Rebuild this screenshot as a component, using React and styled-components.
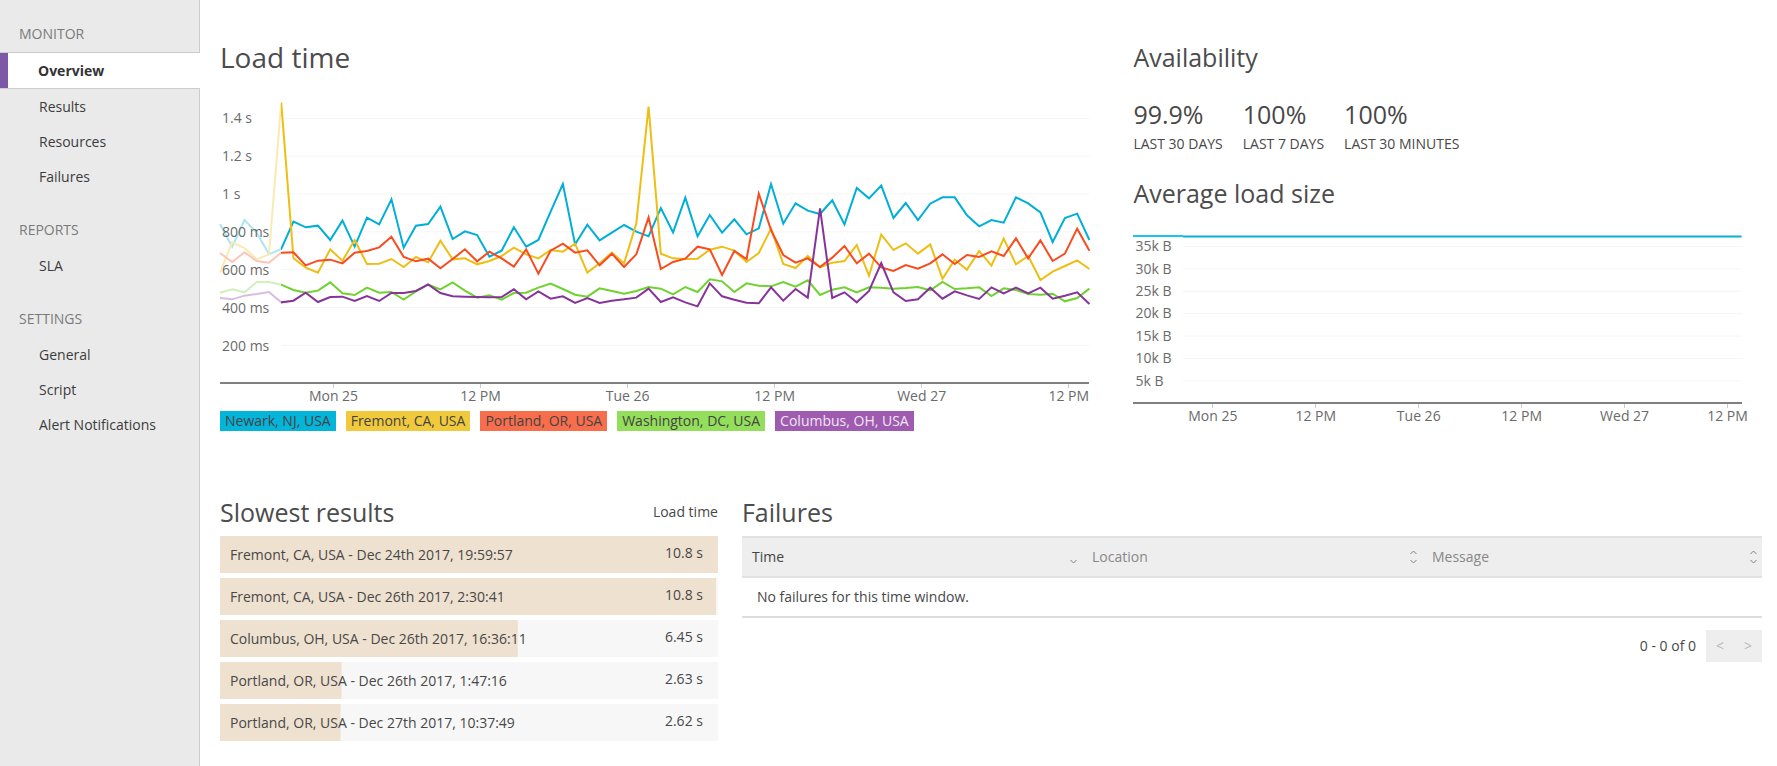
import React from 'react';
import styled, { createGlobalStyle } from 'styled-components';

const GlobalStyle = createGlobalStyle`
  * { box-sizing: border-box; }
  body {
    margin: 0;
    background: #fff;
    color: #484848;
    font-family: "Open Sans", "Noto Sans", sans-serif;
    font-size: 14px;
    line-height: 20px;
  }
  h1, h2, h3, p, ul, dl, dd { margin: 0; padding: 0; }
  ul { list-style: none; }
  button { font: inherit; border: 0; background: none; padding: 0; cursor: pointer; }
`;

const Page = styled.div`
  display: flex;
  min-height: 100vh;
`;

/* Sidebar */

const Sidebar = styled.nav`
  flex: 0 0 200px;
  display: flex;
  flex-direction: column;
  gap: 19px;
  padding: 17px 0;
  background: #eaeaea;
  box-shadow: inset -1px 0 #ccc;
`;

const NavHeading = styled.h3`
  padding: 0 0 2px 19px;
  font-size: 14px;
  font-weight: 400;
  line-height: 33px;
  text-transform: uppercase;
  color: #7a7a7a;
`;

const NavLink = styled.a`
  display: block;
  padding-left: 39px;
  line-height: 35px;
  color: #3c3c3c;
  text-decoration: none;

  &[aria-current='page'] {
    padding-left: 38px;
    border: solid #ccc;
    border-width: 1px 0;
    background: linear-gradient(to right, #7d58a6 8px, #fff 8px);
    font-weight: 700;
    color: #333;
  }
`;

/* Content */

const Main = styled.main`
  flex: 1;
  min-width: 0;
  display: flex;
  flex-direction: column;
  gap: 63px;
  padding: 39px 15px 25px 20px;
`;

const ChartsRow = styled.div`
  display: grid;
  grid-template-columns: 10fr 7fr;
  gap: 44px;
  padding-right: 20px;
`;

const TablesRow = styled.div`
  display: grid;
  grid-template-columns: 62fr 127fr;
  gap: 24px;
`;

const Title = styled.h2`
  font-size: ${(p) => (p.$large ? 28 : 25)}px;
  font-weight: 400;
  line-height: 36px;
  color: #4c4c4c;
`;

/* Charts */

const Chart = styled.figure`
  margin: ${(p) => p.$gap}px 0 0;
`;

const Plot = styled.div`
  display: grid;
  height: ${(p) => p.$height}px;
  border-bottom: 2px solid #808080;
  box-sizing: content-box;

  > * { grid-area: 1 / 1; min-height: 0; }
`;

const Drawing = styled.svg`
  display: block;
  width: 100%;
  height: 100%;
  overflow: visible;

  line, polyline {
    fill: none;
    vector-effect: non-scaling-stroke;
  }
`;

const YLabels = styled.ul`
  display: flex;
  flex-direction: column;
  padding: ${(p) => p.$top}px 2px ${(p) => p.$bottom}px;
  color: #6a6a6a;

  li {
    flex: 1;
    display: flex;
    align-items: center;
    min-height: 0;
  }
`;

const XLabels = styled.ul`
  display: flex;
  padding-left: 4.6%;
  color: #6a6a6a;

  li {
    flex: 0 0 17.73%;
    line-height: 24px;
    text-align: center;
    white-space: nowrap;
    background: linear-gradient(#ccc, #ccc) top center / 1px 4px no-repeat;
  }
`;

const Legend = styled.ul`
  display: flex;
  flex-wrap: wrap;
  gap: 10px;
  margin-top: 3px;
`;

const LegendTag = styled.li`
  padding: 0 5px;
  line-height: 20px;
  white-space: nowrap;
  background: ${(p) => p.$tint};
  color: ${(p) => (p.$light ? '#f0e6f3' : '#444')};
`;

/* Availability */

const Stats = styled.dl`
  display: flex;
  gap: 20px;
  margin: 23px 0 17px;
`;

const Stat = styled.div`
  display: flex;
  flex-direction: column-reverse;

  dt { line-height: 28px; text-transform: uppercase; }
  dd { font-size: 25px; line-height: 32px; }
`;

/* Slowest results */

const SlowHeader = styled.div`
  display: flex;
  align-items: center;
  justify-content: space-between;
  margin-bottom: 6px;
`;

const SlowList = styled.ul`
  display: flex;
  flex-direction: column;
  gap: 5px;
`;

const SlowRow = styled.li`
  display: flex;
  justify-content: space-between;
  padding: 0 15px 0 10px;
  line-height: 37px;
  background: linear-gradient(#eee1d0, #eee1d0) left / var(--fill) 100% no-repeat #f7f7f7;
`;

const SlowValue = styled.span`
  line-height: 34px;
`;

/* Failures */

const Table = styled.table`
  width: 100%;
  margin-top: 6px;
  table-layout: fixed;
  border-collapse: separate;
  border-spacing: 0;
`;

const HeadCell = styled.th`
  height: 42px;
  padding: 0;
  border: solid #e2e2e2;
  border-width: 2px 0;
  background: #eee;
  font-weight: 400;
`;

const SortButton = styled.button`
  display: flex;
  align-items: center;
  justify-content: space-between;
  width: 100%;
  padding: 0 5px 0 10px;
  line-height: 38px;
  color: ${(p) => (p.$active ? '#444' : '#888')};
`;

const SortIcon = styled.svg`
  width: 7px;
  height: 14px;
  fill: none;
  stroke: #808080;
`;

const EmptyCell = styled.td`
  height: 40px;
  padding: 0 15px;
  border-bottom: 2px solid #ddd;
`;

const Pager = styled.div`
  display: flex;
  justify-content: flex-end;
  align-items: center;
  gap: 10px;
  margin-top: 12px;
`;

const PagerButtons = styled.div`
  display: flex;
  background: #eee;
`;

const PagerButton = styled.button`
  width: 28px;
  line-height: 32px;

  &:disabled { color: #b8b8b8; cursor: default; }
`;

/* Data: each trace holds line heights in plot units, counted down from the top of the plot */

const PLOT_W = 2607;
const PLOT_H = 906;

const traces = [
  {
    name: 'Washington, DC, USA', line: '#6fd22e',
    values: [638, 628, 637, 606, 606, 614, 630, 638, 632, 607, 640, 645, 623, 638, 636, 659, 634, 614, 628, 607, 632, 653, 646, 659, 639, 638, 623, 611, 627, 644, 650, 625, 633, 641, 633, 621, 626, 643, 621, 636, 598, 604, 636, 610, 617, 619, 606, 620, 601, 645, 629, 622, 637, 622, 623, 626, 624, 621, 631, 606, 627, 625, 622, 648, 625, 630, 642, 644, 641, 664, 654, 626],
  },
  {
    name: 'Newark, NJ, USA', line: '#00afd7',
    values: [432, 500, 420, 458, 523, 507, 425, 442, 437, 480, 422, 500, 413, 433, 358, 503, 437, 432, 380, 477, 454, 465, 530, 512, 442, 500, 480, 395, 312, 493, 434, 481, 458, 435, 455, 469, 384, 457, 353, 469, 405, 458, 418, 463, 445, 312, 431, 370, 392, 402, 361, 433, 324, 355, 317, 414, 369, 420, 371, 352, 352, 406, 439, 420, 428, 352, 370, 397, 486, 414, 401, 480],
  },
  {
    name: 'Fremont, CA, USA', line: '#edbf14',
    values: [578, 487, 504, 538, 523, 68, 535, 563, 578, 508, 542, 480, 552, 551, 537, 561, 531, 547, 482, 538, 535, 553, 543, 528, 503, 523, 535, 510, 515, 491, 578, 550, 518, 550, 430, 80, 521, 535, 537, 536, 509, 500, 512, 546, 519, 446, 552, 564, 528, 562, 548, 543, 495, 587, 464, 510, 490, 521, 493, 596, 539, 569, 513, 557, 476, 553, 528, 600, 575, 558, 541, 567],
  },
  {
    name: 'Portland, OR, USA', line: '#f84b20',
    values: [519, 546, 517, 543, 548, 518, 517, 556, 542, 539, 550, 518, 513, 502, 470, 531, 544, 536, 565, 537, 508, 544, 515, 535, 560, 508, 581, 512, 491, 518, 511, 556, 521, 561, 523, 412, 567, 546, 536, 500, 508, 585, 513, 537, 341, 450, 525, 548, 535, 561, 533, 498, 550, 521, 562, 573, 555, 566, 550, 523, 552, 525, 531, 514, 528, 475, 535, 481, 543, 521, 446, 512],
  },
  {
    name: 'Columbus, OH, USA', line: '#86349a',
    values: [654, 658, 647, 642, 636, 667, 662, 638, 666, 651, 650, 663, 648, 663, 639, 639, 633, 613, 639, 649, 650, 651, 652, 651, 628, 658, 634, 656, 649, 669, 654, 669, 662, 658, 653, 626, 666, 652, 667, 679, 610, 649, 659, 668, 670, 622, 662, 627, 653, 385, 654, 637, 667, 633, 549, 637, 663, 658, 623, 656, 634, 646, 657, 622, 640, 623, 640, 623, 656, 647, 637, 672],
  },
];

const legend = [
  { name: 'Newark, NJ, USA', tint: '#04b4d9' },
  { name: 'Fremont, CA, USA', tint: '#f0ca3c' },
  { name: 'Portland, OR, USA', tint: '#f86d4c' },
  { name: 'Washington, DC, USA', tint: '#93de5a' },
  { name: 'Columbus, OH, USA', tint: '#9f5baf', light: true },
];

const timeLabels = ['Mon 25', '12 PM', 'Tue 26', '12 PM', 'Wed 27', '12 PM'];
const loadLabels = ['1.4 s', '1.2 s', '1 s', '800 ms', '600 ms', '400 ms', '200 ms'];
const sizeLabels = ['35k B', '30k B', '25k B', '20k B', '15k B', '10k B', '5k B'];

const navigation = [
  { heading: 'Monitor', links: ['Overview', 'Results', 'Resources', 'Failures'] },
  { heading: 'Reports', links: ['SLA'] },
  { heading: 'Settings', links: ['General', 'Script', 'Alert Notifications'] },
];

const stats = [
  { value: '99.9%', label: 'Last 30 days' },
  { value: '100%', label: 'Last 7 days' },
  { value: '100%', label: 'Last 30 minutes' },
];

const slowest = [
  { label: 'Fremont, CA, USA - Dec 24th 2017, 19:59:57', value: '10.8 s', fill: 100 },
  { label: 'Fremont, CA, USA - Dec 26th 2017, 2:30:41', value: '10.8 s', fill: 99.6 },
  { label: 'Columbus, OH, USA - Dec 26th 2017, 16:36:11', value: '6.45 s', fill: 59.8 },
  { label: 'Portland, OR, USA - Dec 26th 2017, 1:47:16', value: '2.63 s', fill: 24.4 },
  { label: 'Portland, OR, USA - Dec 27th 2017, 10:37:49', value: '2.62 s', fill: 24.2 },
];

const toPoints = (values) =>
  values.map((y, i) => `${((i * PLOT_W) / (values.length - 1)).toFixed(1)},${y}`).join(' ');

function TimeAxis() {
  return (
    <XLabels>
      {timeLabels.map((label, i) => <li key={i}>{label}</li>)}
    </XLabels>
  );
}

function LoadTimeChart() {
  return (
    <Chart $gap={5}>
      <Plot $height={302}>
        <Drawing viewBox={`0 0 ${PLOT_W} ${PLOT_H}`} preserveAspectRatio="none" aria-hidden="true">
          {loadLabels.map((label, i) => (
            <line key={label} x1="183" x2={PLOT_W} y1={115 + i * 113.5} y2={115 + i * 113.5} stroke="#f5f5f5" />
          ))}
          {traces.map((trace) => (
            <polyline key={trace.name} points={toPoints(trace.values)} stroke={trace.line} strokeWidth="2" />
          ))}
          <rect x="-6" y="0" width="189" height="900" fill="#fff" opacity="0.68" />
        </Drawing>
        <YLabels $top={19} $bottom={17}>
          {loadLabels.map((label) => <li key={label}>{label}</li>)}
        </YLabels>
      </Plot>
      <TimeAxis />
      <Legend>
        {legend.map((item) => (
          <LegendTag key={item.name} $tint={item.tint} $light={item.light}>{item.name}</LegendTag>
        ))}
      </Legend>
    </Chart>
  );
}

function LoadSizeChart() {
  return (
    <Chart $gap={13}>
      <Plot $height={178}>
        <Drawing viewBox="0 0 609 178" preserveAspectRatio="none" aria-hidden="true">
          {sizeLabels.map((label, i) => (
            <line key={label} x1="50" x2="609" y1={22.5 + i * 22.4} y2={22.5 + i * 22.4} stroke="#f6f6f6" />
          ))}
          <line x1="0" x2="50" y1="12" y2="12" stroke="#1cc6e8" strokeWidth="2" />
          <line x1="50" x2="609" y1="12.5" y2="12.5" stroke="#0bb0d6" strokeWidth="2" />
        </Drawing>
        <YLabels $top={11} $bottom={10}>
          {sizeLabels.map((label) => <li key={label}>{label}</li>)}
        </YLabels>
      </Plot>
      <TimeAxis />
    </Chart>
  );
}

function SortColumn({ label, active }) {
  return (
    <HeadCell scope="col" aria-sort={active ? 'descending' : undefined}>
      <SortButton type="button" $active={active}>
        {label}
        <SortIcon viewBox="0 0 7 14" aria-hidden="true">
          {!active && <path d="M0.5 4 L3.5 1 L6.5 4" />}
          <path d="M0.5 10 L3.5 13 L6.5 10" />
        </SortIcon>
      </SortButton>
    </HeadCell>
  );
}

export default function App() {
  return (
    <>
      <GlobalStyle />
      <Page>
        <Sidebar>
          {navigation.map((group) => (
            <div key={group.heading}>
              <NavHeading>{group.heading}</NavHeading>
              {group.links.map((link) => (
                <NavLink key={link} href="#" aria-current={link === 'Overview' ? 'page' : undefined}>
                  {link}
                </NavLink>
              ))}
            </div>
          ))}
        </Sidebar>
        <Main>
          <ChartsRow>
            <section>
              <Title $large>Load time</Title>
              <LoadTimeChart />
            </section>
            <section>
              <Title>Availability</Title>
              <Stats>
                {stats.map((stat) => (
                  <Stat key={stat.label}>
                    <dt>{stat.label}</dt>
                    <dd>{stat.value}</dd>
                  </Stat>
                ))}
              </Stats>
              <Title>Average load size</Title>
              <LoadSizeChart />
            </section>
          </ChartsRow>
          <TablesRow>
            <section>
              <SlowHeader>
                <Title>Slowest results</Title>
                <span>Load time</span>
              </SlowHeader>
              <SlowList>
                {slowest.map((row) => (
                  <SlowRow key={row.label} style={{ '--fill': `${row.fill}%` }}>
                    <span>{row.label}</span>
                    <SlowValue>{row.value}</SlowValue>
                  </SlowRow>
                ))}
              </SlowList>
            </section>
            <section>
              <Title>Failures</Title>
              <Table>
                <thead>
                  <tr>
                    <SortColumn label="Time" active />
                    <SortColumn label="Location" />
                    <SortColumn label="Message" />
                  </tr>
                </thead>
                <tbody>
                  <tr>
                    <EmptyCell colSpan={3}>No failures for this time window.</EmptyCell>
                  </tr>
                </tbody>
              </Table>
              <Pager>
                <span>0 - 0 of 0</span>
                <PagerButtons>
                  <PagerButton type="button" aria-label="Previous page" disabled>&lt;</PagerButton>
                  <PagerButton type="button" aria-label="Next page" disabled>&gt;</PagerButton>
                </PagerButtons>
              </Pager>
            </section>
          </TablesRow>
        </Main>
      </Page>
    </>
  );
}
